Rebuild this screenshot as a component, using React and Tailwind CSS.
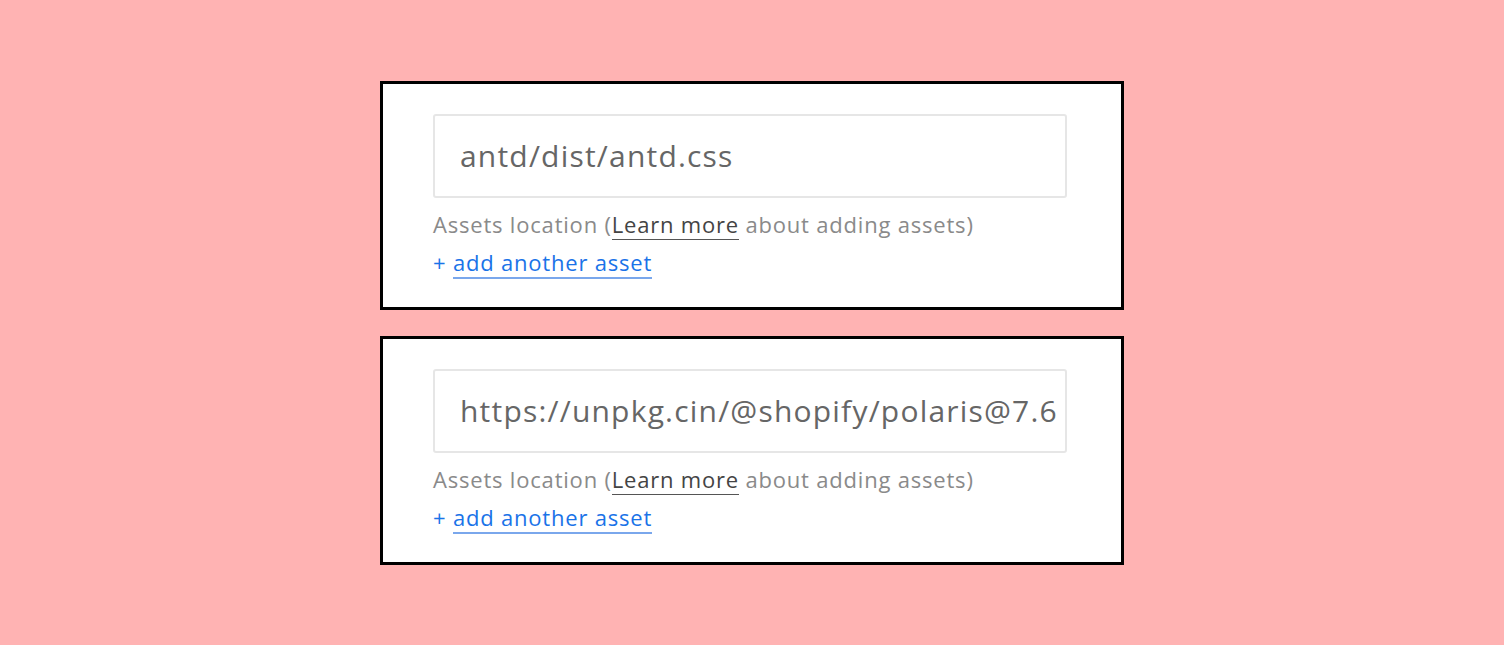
import React from "react";

const assets = ["antd/dist/antd.css", "https://unpkg.cin/@shopify/polaris@7.6"];

function AssetField({ value }) {
  return (
    <div className="w-[744px] border-[3px] border-black bg-white pl-[50px] pr-[54px] pt-[30px] pb-[30px]">
      <div className="flex h-[84px] items-center overflow-hidden whitespace-nowrap rounded-[3px] border-2 border-[#e6e6e6] pl-[25px] text-[30px] tracking-[1.2px] text-[#666666]">
        {value}
      </div>
      <p className="mt-[11px] text-[22px] leading-[30px] tracking-[0.8px] text-[#8a8a8a]">
        Assets location (
        <a className="border-b border-[#555] text-[#444]">Learn more</a> about adding assets)
      </p>
      <p className="mt-[8px] text-[22px] leading-[30px] tracking-[0.8px] text-[#1a73e8]">
        +{" "}
        <a className="border-b-2 border-[#7aa7ec]">add another asset</a>
      </p>
    </div>
  );
}

export default function App() {
  return (
    <div
      className="flex h-[645px] flex-col items-center justify-center gap-[26px] bg-[#ffb3b3]"
      style={{ fontFamily: "'Open Sans', Lato, sans-serif" }}
    >
      {assets.map((a) => (
        <AssetField key={a} value={a} />
      ))}
    </div>
  );
}
